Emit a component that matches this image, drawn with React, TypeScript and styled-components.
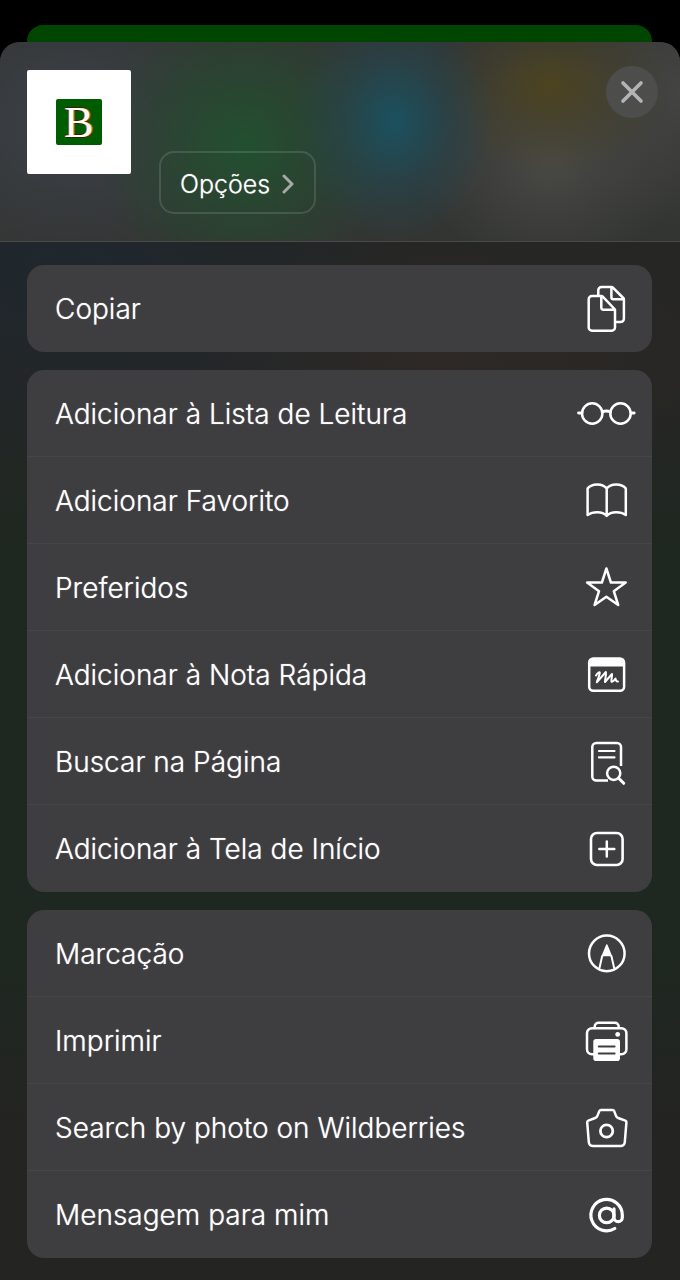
import React from 'react';
import styled, { createGlobalStyle } from 'styled-components';

const GlobalStyle = createGlobalStyle`
	* {
		box-sizing: border-box;
	}
	body {
		margin: 0;
		background: #000;
		color: #fff;
		font-family: Inter, "Noto Sans", sans-serif;
		font-weight: 300;
	}
	button {
		font: inherit;
		color: inherit;
		cursor: pointer;
		text-shadow: 0 0 1px #ffffffb0;
	}
`;

const Page = styled.div`
	min-height: 100vh;
	display: flex;
	flex-direction: column;
	padding-top: 25px;
`;

// the page behind the sheet, only its top edge shows
const PageBehind = styled.div`
	height: 36px;
	margin: 0 28px -19px 27px;
	border-radius: 16px 16px 0 0;
	background: #004600;
`;

const Sheet = styled.main`
	flex: 1;
	overflow: hidden;
	border-radius: 20px 20px 0 0;
	background:
		radial-gradient(360px 220px at 10% 230px, #1f272e, transparent),
		radial-gradient(300px 120px at 65% 320px, #2e2926, transparent),
		linear-gradient(#262624 0, #262624 340px, #1e2720 520px, #1e2720 900px, #242422 1100px, #242422 100%);
`;

const Header = styled.header`
	display: flex;
	gap: 28px;
	padding: 24px 22px 27px 27px;
	border-bottom: 1px solid #484a4a;
	background:
		radial-gradient(100px 120px at 58% 40%, #1b515f 0, #23495380 55%, transparent),
		radial-gradient(120px 90px at 81% 22%, #4c431f 0, #4a432880 50%, transparent),
		radial-gradient(130px 110px at 81% 60%, #494945, transparent),
		radial-gradient(150px 150px at 36% 52%, #22502f 0, #264a3080 60%, transparent),
		radial-gradient(170px 150px at 10% 40%, #3c4048, transparent),
		radial-gradient(120px 140px at 100% 25%, #444442, transparent),
		#333533;
`;

const Thumbnail = styled.div`
	width: 104px;
	height: 104px;
	margin-top: 4px;
	display: grid;
	place-items: center;
	border-radius: 2px;
	background: #fff;
`;

const SiteLogo = styled.span`
	width: 46px;
	height: 46px;
	border-radius: 2px;
	background: #005c00;
	font-family: "Liberation Serif", serif;
	font-size: 44px;
	font-weight: 400;
	line-height: 48px;
	text-align: center;
	text-shadow: -1px 0 #c86a1c, 1px 0 #c86a1c, 0 -1px #3a1c08, 1px 1px #3a1c08;
`;

const OptionsButton = styled.button`
	align-self: flex-end;
	height: 63px;
	margin-top: 85px;
	padding: 2px 20px 0 19px;
	display: flex;
	align-items: center;
	gap: 12px;
	border: 2px solid #ffffff20;
	border-radius: 15px;
	background: transparent;
	font-size: 25px;
`;

const CloseButton = styled.button`
	width: 52px;
	height: 52px;
	margin-left: auto;
	padding: 0;
	display: grid;
	place-items: center;
	border: 0;
	border-radius: 50%;
	background: #4d4d4c;
`;

const Actions = styled.nav`
	display: flex;
	flex-direction: column;
	gap: 18px;
	padding: 23px 28px 22px 27px;
`;

const Group = styled.ul`
	margin: 0;
	padding: 0;
	list-style: none;
	overflow: hidden;
	border-radius: 17px;
	background: #3e3e40;
`;

const Row = styled.button<{ $last: boolean }>`
	width: 100%;
	height: 87px;
	padding: 0 16px 0 28px;
	display: flex;
	align-items: center;
	justify-content: space-between;
	border: 0;
	border-bottom: 1px solid ${(props) => (props.$last ? 'transparent' : '#464648')};
	background: transparent;
	font-size: 28px;
	text-align: left;
`;

const Label = styled.span`
	padding-top: 2px;
`;

const Icon = styled.svg`
	width: 60px;
	height: 60px;
	flex: none;
	fill: none;
	stroke: #fff;
	stroke-width: 2.5;
	stroke-linecap: round;
	stroke-linejoin: round;
`;

const icons: Record<string, React.ReactNode> = {
	copy: (
		<>
			<path d="M25.5 18H16a3.3 3.3 0 0 0-3.3 3.3v28.1a3.3 3.3 0 0 0 3.3 3.3h19.7a3.3 3.3 0 0 0 3.3-3.3V31.5L26.5 18.4a1.5 1.5 0 0 0-1-.4zM25.3 18v11.5a2.2 2.2 0 0 0 2.2 2.2H39" />
			<path d="M22.3 17.5v-5.2A3.3 3.3 0 0 1 25.6 9h9.8a2 2 0 0 1 1.5.6L47.3 20a2 2 0 0 1 .6 1.5v19.2a3.3 3.3 0 0 1-3.3 3.3H40M35.4 9.3v10a2 2 0 0 0 2 2H47.5" />
		</>
	),
	glasses: (
		<>
			<circle cx="16.2" cy="30.5" r="10.2" />
			<circle cx="44.5" cy="30.5" r="10.2" />
			<path d="M26.2 29q4.2-2 8.4 0M2.5 30H6M55 30h3.2" strokeWidth="2.8" />
		</>
	),
	book: (
		<path d="M30.7 18.5C27 13 15.5 13 11.6 18.5V45c5-3.5 14.5-4 19.1.8 4.6-4.8 14.1-4.3 19.1-.8V18.5C45.9 13 34.4 13 30.7 18.5zM30.7 18.5v27" />
	),
	star: (
		<path d="M30.4 11.5 34.9 25.5H49.7L37.8 34.2 42.2 48 30.4 39.7 18.6 48 23 34.2 11.1 25.5H25.9z" />
	),
	note: (
		<>
			<rect x="13.2" y="14.5" width="34.9" height="32.2" rx="4" />
			<path d="M13.2 22.5v-4a4 4 0 0 1 4-4h26.9a4 4 0 0 1 4 4v4z" fill="#fff" stroke="none" />
			<path d="M20 31.5C21.5 29 23.5 27.5 23.8 28.5 23.8 31 21.5 35.5 20.8 38.3L29.8 28C30.6 30 28.8 35.5 29 38L36 30C36.6 32 34.8 35.5 35.5 37.8 37 38 38.5 36 39.5 34.5 39.8 36.5 40.5 37.8 42 37.5" strokeWidth="2" />
		</>
	),
	find: (
		<>
			<path d="M32 49.6H20.3a4 4 0 0 1-4-4V16a4 4 0 0 1 4-4H41a4 4 0 0 1 4 4v19" strokeLinecap="butt" />
			<path d="M23 20h15.5M23 26.4h15.5" strokeWidth="2.2" />
			<circle cx="37.7" cy="42.3" r="6.6" />
			<path d="m42.7 47.3 5 5" strokeWidth="3" />
		</>
	),
	plus: (
		<>
			<rect x="15" y="15" width="31.6" height="32" rx="6" strokeWidth="2.6" />
			<path d="M30.8 23.5v15M23.3 31h15" />
		</>
	),
	markup: (
		<>
			<circle cx="30.8" cy="30.4" r="17.8" />
			<path d="M30.8 22 26.5 32.5h8.6z" fill="#fff" strokeWidth="1.5" />
			<path d="M26.2 33 23.4 45.3M35.4 33l2.8 12.3" strokeWidth="2" />
		</>
	),
	printer: (
		<>
			<path d="M18.7 18v-1.5a3.8 3.8 0 0 1 3.8-3.8h16.4a3.8 3.8 0 0 1 3.8 3.8V18" />
			<path d="M17.5 44.3H16a5 5 0 0 1-5-5V23.2a5 5 0 0 1 5-5h29.4a5 5 0 0 1 5 5v16.1a5 5 0 0 1-5 5H44" />
			<rect x="17.3" y="29" width="26.7" height="22" rx="2.8" fill="#fff" stroke="none" />
			<path d="M22.8 36.4h15.8M22.8 43.4h15.8" stroke="#3e3e40" strokeWidth="2" />
			<circle cx="41.7" cy="24.4" r="2.4" fill="#fff" stroke="none" />
		</>
	),
	camera: (
		<>
			<path d="M25 13h11.5a1.8 1.8 0 0 1 1.7 1.1l1.7 4.5a4 4 0 0 0 2.3 2.4l7.1 2.6a1.7 1.7 0 0 1 1.1 1.7l-1.6 19.9a4.2 4.2 0 0 1-4.2 3.9H17a4.2 4.2 0 0 1-4.2-3.9L11.2 25.3a1.7 1.7 0 0 1 1.1-1.7L19.2 21a4 4 0 0 0 2.3-2.4l1.8-4.5A1.8 1.8 0 0 1 25 13z" />
			<circle cx="30.6" cy="34" r="6.2" strokeWidth="2.8" />
		</>
	),
	at: (
		<g strokeWidth="3.2">
			<circle cx="30.7" cy="31.4" r="7.3" />
			<path d="M38 24.8v8.7a4 4 0 0 0 8.3 0V31a15.7 15.7 0 1 0-7.5 13.5" />
		</g>
	),
};

const groups = [
	[{ label: 'Copiar', icon: 'copy' }],
	[
		{ label: 'Adicionar à Lista de Leitura', icon: 'glasses' },
		{ label: 'Adicionar Favorito', icon: 'book' },
		{ label: 'Preferidos', icon: 'star' },
		{ label: 'Adicionar à Nota Rápida', icon: 'note' },
		{ label: 'Buscar na Página', icon: 'find' },
		{ label: 'Adicionar à Tela de Início', icon: 'plus' },
	],
	[
		{ label: 'Marcação', icon: 'markup' },
		{ label: 'Imprimir', icon: 'printer' },
		{ label: 'Search by photo on Wildberries', icon: 'camera' },
		{ label: 'Mensagem para mim', icon: 'at' },
	],
];

function App() {
	return (
		<Page>
			<GlobalStyle />
			<PageBehind />
			<Sheet>
				<Header>
					<Thumbnail>
						<SiteLogo>B</SiteLogo>
					</Thumbnail>
					<OptionsButton type="button">
						Opções
						<svg width="12" height="20" viewBox="0 0 12 20" fill="none" stroke="#a4aaa6" strokeWidth="3" strokeLinecap="round" strokeLinejoin="round">
							<path d="m2 2 8 8-8 8" />
						</svg>
					</OptionsButton>
					<CloseButton type="button" aria-label="Fechar">
						<svg width="24" height="24" viewBox="0 0 24 24" fill="none" stroke="#b4b4b6" strokeWidth="3.6" strokeLinecap="round">
							<path d="m3 3 18 18M21 3 3 21" />
						</svg>
					</CloseButton>
				</Header>
				<Actions>
					{groups.map((items) => (
						<Group key={items[0].label}>
							{items.map((item, i) => (
								<li key={item.label}>
									<Row type="button" $last={i === items.length - 1}>
										<Label>{item.label}</Label>
										<Icon viewBox="0 0 60 60" aria-hidden="true">{icons[item.icon]}</Icon>
									</Row>
								</li>
							))}
						</Group>
					))}
				</Actions>
			</Sheet>
		</Page>
	);
}

export default App;
